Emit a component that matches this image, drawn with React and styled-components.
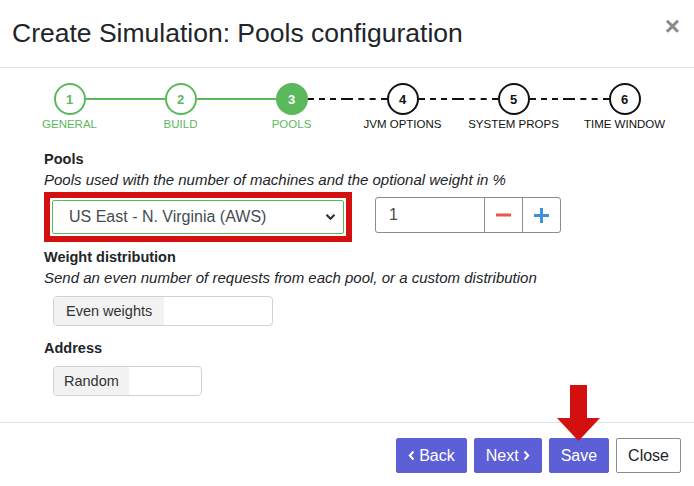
import React from "react";
import styled, { createGlobalStyle } from "styled-components";

const GlobalStyle = createGlobalStyle`
  html, body {
    margin: 0;
    padding: 0;
    background: #ffffff;
  }
  body {
    font-family: "Liberation Sans", Arial, sans-serif;
    color: #212529;
  }
`;

const Modal = styled.div`
  position: relative;
  width: 694px;
  height: 486px;
  overflow: hidden;
  background: #fff;
`;

const Header = styled.header`
  height: 67px;
  display: flex;
  align-items: center;
  justify-content: space-between;
  padding: 0 14px 0 12px;
  border-bottom: 1px solid #dee2e6;
`;

const Title = styled.h1`
  margin: 0;
  font-size: 26.5px;
  font-weight: 400;
  color: #212529;
`;

const CloseX = styled.span`
  font-size: 26px;
  font-weight: 700;
  color: #8a8a8a;
  line-height: 1;
  margin-top: -16px;
`;

const Stepper = styled.div`
  display: grid;
  grid-template-columns: repeat(6, 1fr);
  padding: 0 14px;
  margin-top: 15px;
`;

const Step = styled.div`
  display: flex;
  flex-direction: column;
  align-items: center;
`;

const StepTrack = styled.div`
  width: 100%;
  display: flex;
  align-items: center;
`;

const Connector = styled.div`
  flex: 1;
  height: 0;
  border-top: 2px ${(p) => (p.$done ? "solid" : "dashed")}
    ${(p) => (p.$done ? "#5cb85c" : "#111")};
  visibility: ${(p) => (p.$hidden ? "hidden" : "visible")};
`;

const Circle = styled.div`
  width: 32px;
  height: 32px;
  box-sizing: border-box;
  border-radius: 50%;
  border: 2px solid ${(p) => (p.$state === "todo" ? "#111" : "#5cb85c")};
  background: ${(p) => (p.$state === "active" ? "#5cb85c" : "#fff")};
  color: ${(p) =>
    p.$state === "active" ? "#fff" : p.$state === "done" ? "#5cb85c" : "#111"};
  display: flex;
  align-items: center;
  justify-content: center;
  font-size: 13px;
  font-weight: 700;
`;

const StepLabel = styled.div`
  margin-top: 2px;
  font-size: 11.5px;
  line-height: 14px;
  white-space: nowrap;
  color: ${(p) => (p.$state === "todo" ? "#111" : "#5cb85c")};
`;

const Body = styled.section`
  padding: 18px 44px 0;
`;

const FieldLabel = styled.div`
  font-size: 14.5px;
  font-weight: 700;
  line-height: 20px;
  margin-top: ${(p) => p.$top || 0}px;
`;

const Hint = styled.div`
  font-size: 15px;
  font-style: italic;
  line-height: 20px;
  margin-top: 1px;
`;

const PoolRow = styled.div`
  display: flex;
  align-items: flex-start;
  gap: 23px;
  margin-top: 2px;
`;

const Highlight = styled.div`
  width: 308px;
  box-sizing: border-box;
  border: 6px solid #d40f10;
  padding: 2px;
`;

const Select = styled.div`
  height: 34px;
  box-sizing: border-box;
  border: 1px solid #5cb85c;
  border-radius: 2px;
  display: flex;
  align-items: center;
  justify-content: space-between;
  padding: 0 7px 0 16px;
  font-size: 16px;
  color: #464b51;
`;

const InputGroup = styled.div`
  display: flex;
  height: 36px;
  margin-top: 5px;
  box-sizing: border-box;
  border: 1px solid #8c8c8c;
  border-radius: 3px;
  overflow: hidden;
`;

const NumberField = styled.div`
  width: 108px;
  display: flex;
  align-items: center;
  padding-left: 13px;
  box-sizing: border-box;
  font-size: 16px;
  color: #464b51;
`;

const StepButton = styled.div`
  width: 37px;
  border-left: 1px solid #8c8c8c;
  display: flex;
  align-items: center;
  justify-content: center;
`;

const Toggle = styled.div`
  display: flex;
  width: ${(p) => p.$width}px;
  height: 30px;
  box-sizing: border-box;
  margin-left: 9px;
  margin-top: ${(p) => p.$top}px;
  border: 1px solid #cfd2d6;
  border-radius: 4px;
  overflow: hidden;
`;

const ToggleOption = styled.div`
  display: flex;
  align-items: center;
  padding: 0 ${(p) => p.$pad}px;
  background: #f2f2f2;
  font-size: 14.5px;
  color: #333;
`;

const Footer = styled.footer`
  margin-top: 26px;
  border-top: 1px solid #dee2e6;
  display: flex;
  justify-content: flex-end;
  gap: 7px;
  padding: 15px 13px 0;
`;

const Button = styled.button`
  height: 35px;
  padding: 0 ${(p) => (p.$light ? 11 : 11)}px;
  border-radius: 2px;
  border: 1px solid ${(p) => (p.$light ? "#8c8c8c" : "#5d5fd6")};
  background: ${(p) => (p.$light ? "#fff" : "#5d5fd6")};
  color: ${(p) => (p.$light ? "#212529" : "#fff")};
  font-family: "Liberation Sans", Arial, sans-serif;
  font-size: 16px;
  display: flex;
  align-items: center;
  gap: 4px;
`;

const Arrow = styled.svg`
  position: absolute;
  left: 556px;
  top: 383px;
`;

const steps = [
  { n: 1, label: "GENERAL", state: "done" },
  { n: 2, label: "BUILD", state: "done" },
  { n: 3, label: "POOLS", state: "active" },
  { n: 4, label: "JVM OPTIONS", state: "todo" },
  { n: 5, label: "SYSTEM PROPS", state: "todo" },
  { n: 6, label: "TIME WINDOW", state: "todo" },
];

const Chevron = () => (
  <svg width="11" height="8" viewBox="0 0 11 8">
    <path d="M1.5 1.8 L5.5 5.8 L9.5 1.8" fill="none" stroke="#333" strokeWidth="2.2" />
  </svg>
);

const Minus = () => (
  <svg width="15" height="4" viewBox="0 0 15 4">
    <rect x="0" y="0.5" width="15" height="3" fill="#e8574b" />
  </svg>
);

const Plus = () => (
  <svg width="15" height="15" viewBox="0 0 15 15">
    <rect x="0" y="6" width="15" height="3" fill="#3d8fdf" />
    <rect x="6" y="0" width="3" height="15" fill="#3d8fdf" />
  </svg>
);

const SmallChev = ({ dir }) => (
  <svg width="7" height="11" viewBox="0 0 7 11">
    <path
      d={dir === "left" ? "M5.5 1.5 L1.8 5.5 L5.5 9.5" : "M1.5 1.5 L5.2 5.5 L1.5 9.5"}
      fill="none"
      stroke="#fff"
      strokeWidth="2"
    />
  </svg>
);

export default function App() {
  return (
    <Modal>
      <GlobalStyle />
      <Header>
        <Title>Create Simulation: Pools configuration</Title>
        <CloseX>×</CloseX>
      </Header>

      <Stepper>
        {steps.map((s, i) => {
          const next = steps[i + 1];
          return (
            <Step key={s.n}>
              <StepTrack>
                <Connector $hidden={i === 0} $done={s.state !== "todo"} />
                <Circle $state={s.state}>{s.n}</Circle>
                <Connector
                  $hidden={!next}
                  $done={next && next.state !== "todo"}
                />
              </StepTrack>
              <StepLabel $state={s.state}>{s.label}</StepLabel>
            </Step>
          );
        })}
      </Stepper>

      <Body>
        <FieldLabel>Pools</FieldLabel>
        <Hint>Pools used with the number of machines and the optional weight in %</Hint>
        <PoolRow>
          <Highlight>
            <Select>
              <span>US East - N. Virginia (AWS)</span>
              <Chevron />
            </Select>
          </Highlight>
          <InputGroup>
            <NumberField>1</NumberField>
            <StepButton>
              <Minus />
            </StepButton>
            <StepButton>
              <Plus />
            </StepButton>
          </InputGroup>
        </PoolRow>

        <FieldLabel $top={5}>Weight distribution</FieldLabel>
        <Hint>Send an even number of requests from each pool, or a custom distribution</Hint>
        <Toggle $width={220} $top={8}>
          <ToggleOption $pad={12}>Even weights</ToggleOption>
        </Toggle>

        <FieldLabel $top={12}>Address</FieldLabel>
        <Toggle $width={149} $top={8}>
          <ToggleOption $pad={10}>Random</ToggleOption>
        </Toggle>
      </Body>

      <Footer>
        <Button>
          <SmallChev dir="left" />
          Back
        </Button>
        <Button>
          Next
          <SmallChev dir="right" />
        </Button>
        <Button>Save</Button>
        <Button $light>Close</Button>
      </Footer>

      <Arrow width="46" height="60" viewBox="0 0 46 60">
        <path d="M14 2 L31 2 L31 35 L44 35 L22.5 58 L1 35 L14 35 Z" fill="#d40f10" />
      </Arrow>
    </Modal>
  );
}
